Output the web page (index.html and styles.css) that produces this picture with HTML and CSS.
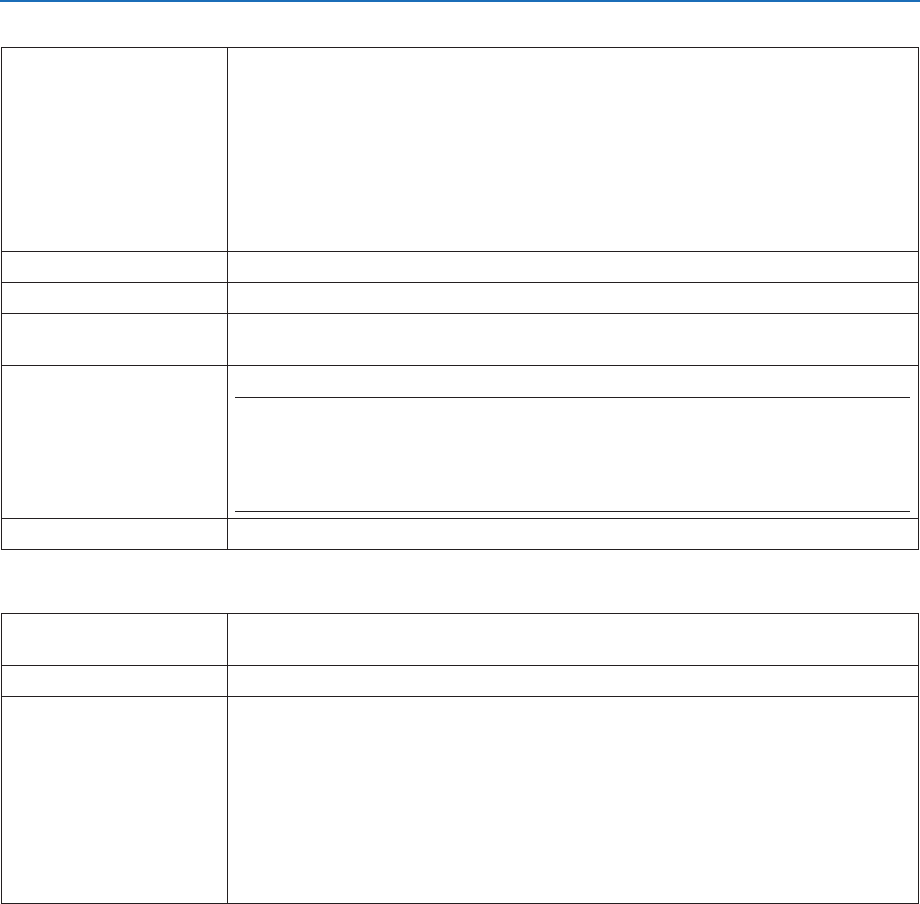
FILE: index.html
```html
<!DOCTYPE html>
<html lang="en">
<head>
<meta charset="utf-8">
<title>Table</title>
<link rel="stylesheet" href="styles.css">
</head>
<body>
<div class="topbar"></div>
<div class="table first">
  <div class="row h204"><div class="label"></div><div class="value"></div></div>
  <div class="row h31"><div class="label"></div><div class="value"></div></div>
  <div class="row h31"><div class="label"></div><div class="value"></div></div>
  <div class="row h52"><div class="label"></div><div class="value"></div></div>
  <div class="row h153"><div class="label"></div><div class="value boxed"><div class="rules"></div></div></div>
  <div class="row h31"><div class="label"></div><div class="value"></div></div>
</div>
<div class="table second">
  <div class="row h52"><div class="label"></div><div class="value"></div></div>
  <div class="row h31"><div class="label"></div><div class="value"></div></div>
  <div class="row h207"><div class="label"></div><div class="value"></div></div>
</div>
</body>
</html>
```
FILE: styles.css
```css
* { box-sizing: border-box; }
html, body { margin: 0; padding: 0; background: #fff; font-family: "Liberation Sans", Arial, sans-serif; }
.topbar { height: 2px; background: #1b6db8; }
.table { margin: 0 1px; border: 1px solid #231f20; border-bottom: none; }
.table.first { margin-top: 45px; }
.table.second { margin-top: 63px; }
.row { display: grid; grid-template-columns: 226px 1fr; border-bottom: 1px solid #231f20; }
.label { border-right: 1px solid #231f20; }
.h31 { height: 31px; }
.h52 { height: 52px; }
.h153 { height: 153px; }
.h204 { height: 204px; }
.h207 { height: 207px; }
.boxed { padding: 31px 8px 6px 7px; }
.rules { height: 115px; border-top: 1px solid #231f20; border-bottom: 1px solid #231f20; }
```
